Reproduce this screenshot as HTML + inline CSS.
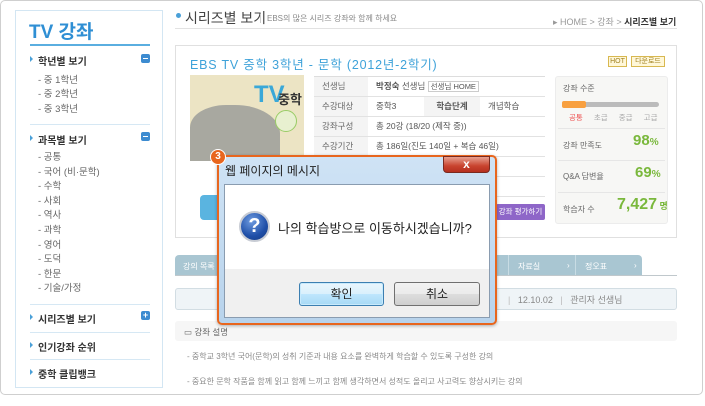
<!DOCTYPE html>
<html><head><meta charset="utf-8"><style>
*{margin:0;padding:0;box-sizing:border-box}
body{width:705px;height:406px;background:#fff;font-family:"Liberation Sans","Noto Sans CJK KR",sans-serif;position:relative;overflow:hidden;color:#555}
.a{position:absolute}
.t{font-size:9px;color:#666;white-space:nowrap}
.m{font-size:10px;font-weight:bold;color:#333;white-space:nowrap}
.sub{font-size:9.5px;color:#666;white-space:nowrap}
.hr{height:1px;background:#d6e8f4}
.lbl{background:#f4f4f4}
</style></head><body>
<div class="a" style="left:0;top:0;width:703px;height:395px;border:1px solid #cfcfcf;border-radius:5px"></div>
<!-- sidebar -->
<div class="a" style="left:15px;top:10px;width:148px;height:378px;border:1px solid #d3e6f3"></div>
<div class="a" style="left:29px;top:17px;font-size:19px;font-weight:bold;color:#2f8fd4">TV 강좌</div>
<div class="a" style="left:30px;top:44px;width:120px;height:2px;background:#5aaee0"></div>
<div class="a m" style="left:38px;top:53px">학년별 보기</div>
<div class="a" style="left:30px;top:56px;width:0;height:0;border-left:3px solid #4aa0d8;border-top:3px solid transparent;border-bottom:3px solid transparent"></div>
<div class="a" style="left:141px;top:54px;width:9px;height:9px;background:#3c8bd0;border-radius:2px"><div style="margin:4px 2px 0;height:1px;background:#fff"></div></div>
<div class="a sub" style="left:38px;top:72px">- 중 1학년</div>
<div class="a sub" style="left:38px;top:86px">- 중 2학년</div>
<div class="a sub" style="left:38px;top:101px">- 중 3학년</div>
<div class="a hr" style="left:30px;top:124px;width:120px"></div>
<div class="a m" style="left:38px;top:132px">과목별 보기</div>
<div class="a" style="left:30px;top:135px;width:0;height:0;border-left:3px solid #4aa0d8;border-top:3px solid transparent;border-bottom:3px solid transparent"></div>
<div class="a" style="left:141px;top:132px;width:9px;height:9px;background:#3c8bd0;border-radius:2px"><div style="margin:4px 2px 0;height:1px;background:#fff"></div></div>
<div class="a sub" style="left:38px;top:151px;line-height:14.6px">- 공통<br>- 국어 (비·문학)<br>- 수학<br>- 사회<br>- 역사<br>- 과학<br>- 영어<br>- 도덕<br>- 한문<br>- 기술/가정</div>
<div class="a hr" style="left:30px;top:304px;width:120px"></div>
<div class="a m" style="left:38px;top:311px">시리즈별 보기</div>
<div class="a" style="left:30px;top:314px;border-left:3px solid #4aa0d8;border-top:3px solid transparent;border-bottom:3px solid transparent"></div>
<div class="a" style="left:141px;top:311px;width:9px;height:9px;background:#3c8bd0;border-radius:2px;color:#fff;font-size:9px;line-height:9px;text-align:center;font-weight:bold">+</div>
<div class="a hr" style="left:30px;top:332px;width:120px"></div>
<div class="a m" style="left:38px;top:339px">인기강좌 순위</div>
<div class="a" style="left:30px;top:342px;border-left:3px solid #4aa0d8;border-top:3px solid transparent;border-bottom:3px solid transparent"></div>
<div class="a hr" style="left:30px;top:359px;width:120px"></div>
<div class="a m" style="left:38px;top:366px">중학 클립뱅크</div>
<div class="a" style="left:30px;top:369px;border-left:3px solid #4aa0d8;border-top:3px solid transparent;border-bottom:3px solid transparent"></div>
<!-- header -->
<div class="a" style="left:176px;top:13px;width:5px;height:5px;background:#4aa0d8;border-radius:50%"></div>
<div class="a" style="left:185px;top:8px;font-size:14px;color:#444;white-space:nowrap">시리즈별 보기</div>
<div class="a" style="left:260px;top:14px;width:1px;height:9px;background:#ccc"></div>
<div class="a t" style="left:267px;top:13px;font-size:8px;color:#888">EBS의 많은 시리즈 강좌와 함께 하세요</div>
<div class="a t" style="left:553px;top:15px;color:#999">▸ HOME &gt; 강좌 &gt; <b style="color:#333">시리즈별 보기</b></div>
<div class="a" style="left:175px;top:28px;width:502px;height:1px;background:#e2e2e2"></div>
<!-- card -->
<div class="a" style="left:175px;top:45px;width:502px;height:193px;border:1px solid #e0e0e0"></div>
<div class="a" style="left:190px;top:54px;font-size:12.5px;color:#3ea2d9;white-space:nowrap;letter-spacing:.8px">EBS TV 중학 3학년 - 문학 (2012년-2학기)</div>
<div class="a" style="left:608px;top:56px;width:19px;height:11px;border:1px solid #d8b850;background:#fff7d8;font-size:7px;color:#a08020;text-align:center;line-height:9px">HOT</div>
<div class="a" style="left:631px;top:56px;width:34px;height:11px;border:1px solid #d8b850;background:#fff7d8;font-size:7px;color:#a08020;text-align:center;line-height:9px">다운로드</div>
<div class="a" style="left:190px;top:75px;width:114px;height:86px;background:#ece4c4;overflow:hidden">
<div class="a" style="left:0;top:30px;width:90px;height:56px;background:#a8a8a0;border-radius:40% 50% 0 0"></div>
<div class="a" style="left:64px;top:6px;font-size:24px;font-weight:bold;color:#3aa8d8">TV</div>
<div class="a" style="left:88px;top:14px;font-size:13px;font-weight:bold;color:#333">중학</div>
<div class="a" style="left:85px;top:35px;width:22px;height:22px;border-radius:50%;background:#e8f0d0;border:1px solid #9c6"></div>
</div>
<div class="a" style="left:314px;top:76px;width:231px;height:120px;border-top:1px solid #ddd">
<div style="height:20px;border-bottom:1px solid #e2e2e2;display:flex;font-size:8.5px;line-height:19px"><div class="lbl" style="width:54px;padding-left:8px;color:#666">선생님</div><div style="padding-left:8px;color:#555"><b>박정숙</b> 선생님 <span style="border:1px solid #ccc;padding:0 2px;font-size:7.5px">선생님 HOME</span></div></div>
<div style="height:20px;border-bottom:1px solid #e2e2e2;display:flex;font-size:8.5px;line-height:19px"><div class="lbl" style="width:54px;padding-left:8px;color:#666">수강대상</div><div style="width:56px;padding-left:8px">중학3</div><div class="lbl" style="width:56px;text-align:center;font-weight:bold;color:#555">학습단계</div><div style="padding-left:8px">개념학습</div></div>
<div style="height:20px;border-bottom:1px solid #e2e2e2;display:flex;font-size:8.5px;line-height:19px"><div class="lbl" style="width:54px;padding-left:8px;color:#666">강좌구성</div><div style="padding-left:8px">총 20강 (18/20 (제작 중))</div></div>
<div style="height:20px;border-bottom:1px solid #e2e2e2;display:flex;font-size:8.5px;line-height:19px"><div class="lbl" style="width:54px;padding-left:8px;color:#666">수강기간</div><div style="padding-left:8px">총 186일(진도 140일 + 복습 46일)</div></div>
<div style="height:20px;border-bottom:1px solid #e2e2e2"></div>
<div style="height:20px;border-bottom:1px solid #e2e2e2"></div>
</div>
<div class="a" style="left:200px;top:195px;width:40px;height:25px;background:#5ab4e0;border-radius:4px"></div>
<div class="a" style="left:496px;top:204px;width:49px;height:16px;background:#8e66c8;border-radius:2px;color:#fff;font-size:7.5px;line-height:16px;text-align:center">강좌 평가하기</div>
<!-- stats -->
<div class="a" style="left:555px;top:76px;width:113px;height:148px;background:#f7f7f5;border:1px solid #ececec;border-radius:3px"></div>
<div class="a t" style="left:563px;top:83px;font-size:8px">강좌 수준</div>
<div class="a" style="left:562px;top:102px;width:97px;height:5px;background:#bbb;border-radius:3px"></div>
<div class="a" style="left:562px;top:101px;width:24px;height:7px;background:#f8a040;border-radius:2px"></div>
<div class="a t" style="left:569px;top:112px;font-size:7.5px;color:#aaa;word-spacing:9px"><span style="color:#e55">공통</span> 초급 중급 고급</div>
<div class="a" style="left:558px;top:128px;width:107px;height:1px;background:#e6e6e6"></div>
<div class="a t" style="left:563px;top:140px;font-size:8px">강좌 만족도</div>
<div class="a" style="left:633px;top:132px;font-size:15px;font-weight:bold;color:#7ab83c">98<span style="font-size:10px">%</span></div>
<div class="a" style="left:558px;top:160px;width:107px;height:1px;background:#e6e6e6"></div>
<div class="a t" style="left:563px;top:171px;font-size:8px">Q&amp;A 답변율</div>
<div class="a" style="left:635px;top:164px;font-size:15px;font-weight:bold;color:#7ab83c">69<span style="font-size:10px">%</span></div>
<div class="a" style="left:558px;top:192px;width:107px;height:1px;background:#e6e6e6"></div>
<div class="a t" style="left:563px;top:204px;font-size:8px">학습자 수</div>
<div class="a" style="left:617px;top:196px;font-size:16px;font-weight:bold;color:#7ab83c">7,427<span style="font-size:9px"> 명</span></div>
<!-- tabs -->
<div class="a" style="left:175px;top:255px;width:467px;height:20px;background:#a9c6d2;border-radius:4px 4px 0 0"></div>
<div class="a t" style="left:183px;top:261px;color:#fff;font-size:8px">강의 목록</div>
<div class="a t" style="left:493px;top:261px;color:#fff;font-size:8px">›</div>
<div class="a" style="left:508px;top:255px;width:1px;height:20px;background:#c8dce4"></div>
<div class="a t" style="left:518px;top:261px;color:#fff;font-size:8px">자료실</div>
<div class="a t" style="left:567px;top:261px;color:#fff;font-size:8px">›</div>
<div class="a" style="left:575px;top:255px;width:1px;height:20px;background:#c8dce4"></div>
<div class="a t" style="left:585px;top:261px;color:#fff;font-size:8px">정오표</div>
<div class="a t" style="left:634px;top:261px;color:#fff;font-size:8px">›</div>
<div class="a" style="left:175px;top:275px;width:502px;height:1px;background:#c0c8cc"></div>
<div class="a" style="left:175px;top:288px;width:502px;height:22px;background:#eff4f7;border:1px solid #d2dde3;border-radius:3px"></div>
<div class="a t" style="left:508px;top:293px;color:#bbb">|&nbsp;&nbsp;&nbsp;<span style="color:#888">12.10.02</span>&nbsp;&nbsp;&nbsp;|&nbsp;&nbsp;&nbsp;<span style="color:#888">관리자 선생님</span></div>
<div class="a" style="left:175px;top:321px;width:502px;height:20px;background:#f6f6f6;border-radius:3px"></div>
<div class="a t" style="left:184px;top:326px;font-size:8.5px">▭ 강좌 설명</div>
<div class="a t" style="left:187px;top:351px;font-size:8px;color:#888">- 중학교 3학년 국어(문학)의 성취 기준과 내용 요소를 완벽하게 학습할 수 있도록 구성한 강의</div>
<div class="a t" style="left:187px;top:376px;font-size:8px;color:#888">- 중요한 문학 작품을 함께 읽고 함께 느끼고 함께 생각하면서 성적도 올리고 사고력도 향상시키는 강의</div>
<!-- dialog -->
<div class="a" style="left:217px;top:155px;width:280px;height:170px;border:2px solid #e8661e;border-radius:5px;background:linear-gradient(#cfe3f5,#b8d3ec);box-shadow:0 1px 3px rgba(0,0,0,.3)"></div>
<div class="a" style="left:443px;top:156px;width:47px;height:17px;background:linear-gradient(#e8a090,#c8432e 60%,#b53020);border:1px solid #7a2a20;border-radius:0 0 4px 4px;color:#fff;font-weight:bold;font-size:12px;text-align:center;line-height:14px">x</div>
<div class="a" style="left:225px;top:162px;font-size:12px;color:#222">웹 페이지의 메시지</div>
<div class="a" style="left:224px;top:184px;width:266px;height:134px;border:1px solid #8a9cb0;background:#f0f0f0"></div>
<div class="a" style="left:225px;top:185px;width:264px;height:84px;background:#fff"></div>
<div class="a" style="left:239px;top:211px;width:31px;height:31px;border-radius:50%;background:radial-gradient(circle at 40% 30%,#6e9be0,#1f4fa8 60%,#163a80);border:2px solid #c8ccd4;color:#fff;font-weight:bold;font-size:20px;text-align:center;line-height:27px">?</div>
<div class="a" style="left:278px;top:218px;font-size:13px;color:#222;white-space:nowrap">나의 학습방으로 이동하시겠습니까?</div>
<div class="a" style="left:299px;top:282px;width:85px;height:24px;border:1px solid #3c7fb1;border-radius:3px;background:linear-gradient(#eaf6fd,#d9f0fc 50%,#bee6fd 51%,#a7d9f5);box-shadow:inset 0 0 0 1px #c8eafc;font-size:12px;color:#222;text-align:center;line-height:22px">확인</div>
<div class="a" style="left:394px;top:282px;width:86px;height:24px;border:1px solid #707070;border-radius:3px;background:linear-gradient(#f2f2f2,#ebebeb 50%,#dddddd 51%,#cfcfcf);font-size:12px;color:#222;text-align:center;line-height:22px">취소</div>
<div class="a" style="left:210px;top:149px;width:16px;height:16px;border-radius:50%;background:#e8661e;border:1px solid #fff;color:#fff;font-weight:bold;font-size:10px;text-align:center;line-height:14px">3</div>
</body></html>
